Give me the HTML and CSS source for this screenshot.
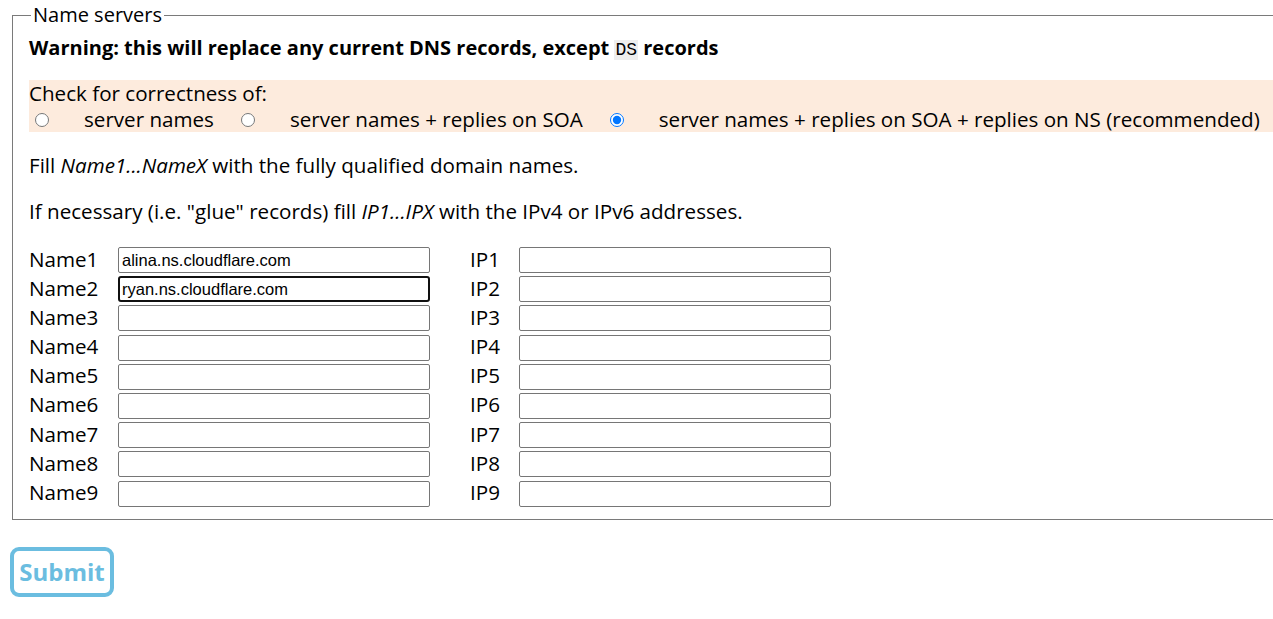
FILE: index.html
```html
<!DOCTYPE html>
<html lang="en">
<head>
<meta charset="utf-8">
<title>Name servers</title>
<link rel="stylesheet" href="styles.css">
</head>
<body>
<form class="ns-form">
  <fieldset class="ns-fieldset">
    <legend class="ns-legend">Name servers</legend>
    <p class="warning">Warning: this will replace any current DNS records, except <code class="code">DS</code> records</p>
    <div class="check-band">
      <div class="check-title">Check for correctness of:</div>
      <div class="check-options">
        <label class="opt"><input type="radio" name="check" class="radio"><span class="opt-text">server names</span></label>
        <label class="opt"><input type="radio" name="check" class="radio"><span class="opt-text">server names + replies on SOA</span></label>
        <label class="opt"><input type="radio" name="check" class="radio" checked><span class="opt-text">server names + replies on SOA + replies on NS (recommended)</span></label>
      </div>
    </div>
    <p class="para">Fill <em>Name1...NameX</em> with the fully qualified domain names.</p>
    <p class="para">If necessary (i.e. "glue" records) fill <em>IP1...IPX</em> with the IPv4 or IPv6 addresses.</p>
    <div class="grid">
      <span class="lbl">Name1</span><input class="field" type="text" value="alina.ns.cloudflare.com"><span class="lbl">IP1</span><input class="field" type="text">
      <span class="lbl">Name2</span><input class="field focused" type="text" value="ryan.ns.cloudflare.com"><span class="lbl">IP2</span><input class="field" type="text">
      <span class="lbl">Name3</span><input class="field" type="text"><span class="lbl">IP3</span><input class="field" type="text">
      <span class="lbl">Name4</span><input class="field" type="text"><span class="lbl">IP4</span><input class="field" type="text">
      <span class="lbl">Name5</span><input class="field" type="text"><span class="lbl">IP5</span><input class="field" type="text">
      <span class="lbl">Name6</span><input class="field" type="text"><span class="lbl">IP6</span><input class="field" type="text">
      <span class="lbl">Name7</span><input class="field" type="text"><span class="lbl">IP7</span><input class="field" type="text">
      <span class="lbl">Name8</span><input class="field" type="text"><span class="lbl">IP8</span><input class="field" type="text">
      <span class="lbl">Name9</span><input class="field" type="text"><span class="lbl">IP9</span><input class="field" type="text">
    </div>
  </fieldset>
  <button type="button" class="submit">Submit</button>
</form>
</body>
</html>
```
FILE: styles.css
```css
html {
  overflow: hidden;
}
body {
  margin: 0;
  padding: 3px 10px 0 10px;
  font-family: "Open Sans", "Noto Sans", sans-serif;
  font-size: 20.6px;
  color: #000;
  background: #fff;
}
.ns-form {
  margin: 0;
}
.ns-fieldset {
  width: 1300px;
  margin: 0 0 0 2px;
  padding: 0 0 12px 16px;
  border: 1px solid #7a7a7a;
  min-width: 0;
}
.ns-legend {
  margin-left: 2px;
  padding: 0 2px;
  line-height: 24px;
  font-size: 20px;
}
.warning {
  margin: 8px 0 0 0;
  font-weight: bold;
  font-size: 20px;
  line-height: 26px;
}
.code {
  font-family: "Liberation Mono", "DejaVu Sans Mono", monospace;
  font-weight: normal;
  font-size: 18px;
  background: #eeeeee;
  padding: 0 1px;
}
.check-band {
  margin-top: 17px;
  background: #fdebdd;
  line-height: 26px;
}
.check-title {
  height: 26px;
}
.check-options {
  display: flex;
  align-items: center;
  height: 26px;
}
.opt {
  display: flex;
  align-items: center;
}
.radio {
  width: 14px;
  height: 14px;
  margin: 2px 0 0 6px;
  accent-color: #0075ff;
}
.opt-text {
  margin-left: 35px;
  margin-right: 21px;
}
.para {
  margin: 20px 0 0 0;
  line-height: 26px;
}
.grid {
  margin-top: 23px;
  display: grid;
  grid-template-columns: 89px 352px 49px 312px;
  row-gap: 3.2px;
  align-items: center;
}
.lbl {
  line-height: 26px;
  margin-top: -3px;
}
.field {
  box-sizing: border-box;
  height: 26px;
  width: 312px;
  margin: 0;
  padding: 1px 3px;
  border: 1px solid #767676;
  border-radius: 2px;
  font-family: "Liberation Sans", Arial, sans-serif;
  font-size: 16.5px;
  background: #fff;
  color: #000;
}
.focused {
  border: 2px solid #101010;
  border-radius: 3px;
  padding: 0 2px;
}
.submit {
  margin-top: 27px;
  display: block;
  box-sizing: border-box;
  width: 104px;
  height: 50px;
  border: 4px solid #6bbde0;
  border-radius: 9px;
  background: #fff;
  color: #6bbde0;
  font-family: "Open Sans", "Noto Sans", sans-serif;
  font-weight: bold;
  font-size: 24px;
  padding: 0;
  margin-left: 0;
}
```
